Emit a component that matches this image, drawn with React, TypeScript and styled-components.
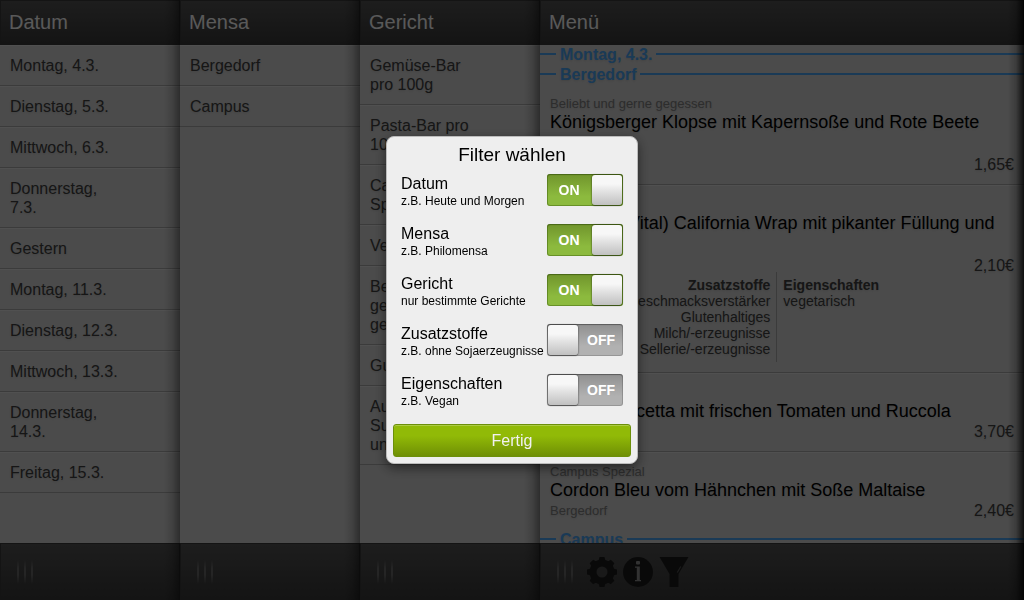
import React, { useState } from "react";
import styled, { createGlobalStyle, css } from "styled-components";

const GlobalStyle = createGlobalStyle`
  * { box-sizing: border-box; }
  body {
    margin: 0;
    overflow: hidden;
    background: #000;
    color: #333;
    font: 16px/19px "Liberation Sans", Arial, sans-serif;
  }
  ul { list-style: none; margin: 0; padding: 0; }
  h1, h2, h3, p { margin: 0; font-weight: normal; }
  button { font-family: inherit; cursor: pointer; }
`;

const Panels = styled.main`
  display: flex;
  height: 100vh;
`;

const PanelBox = styled.section<{ $grow?: boolean }>`
  position: relative;
  display: flex;
  flex-direction: column;
  flex: ${(p) => (p.$grow ? "1 1 0" : "0 0 180px")};
  min-width: 0;
  background: #d6d6d6;

  &::after {
    content: "";
    position: absolute;
    top: 0;
    right: 0;
    bottom: 0;
    width: 16px;
    pointer-events: none;
    background: linear-gradient(
      to right,
      transparent,
      rgba(0, 0, 0, ${(p) => (p.$grow ? 0.2 : 0.12)}) 50%,
      rgba(0, 0, 0, ${(p) => (p.$grow ? 0.8 : 0.4)})
    );
  }
`;

const bar = css`
  display: flex;
  align-items: center;
  flex: none;
  border: 1px solid #3a3a3a;
  background: linear-gradient(#545454, #3a3a3a);
`;

const Header = styled.header`
  ${bar}
  height: 45px;
  padding: 0 8px 2px;
  color: #fff;
  line-height: 24px;
  h2 { font-size: 20px; }
`;

const Footer = styled.footer`
  ${bar}
  height: 57px;
  padding: 0 10px 0 16px;
`;

const Body = styled.div`
  flex: 1;
  min-height: 0;
  overflow: hidden;
`;

const Grabber = styled.span`
  display: flex;
  gap: 5px;
  width: 27px;
  i {
    width: 2px;
    height: 24px;
    background: linear-gradient(transparent, #6c6c6c 35%, #6c6c6c 60%, transparent);
  }
`;

const rule = css`
  border-top: 1px solid #e4e4e4;
  border-bottom: 1px solid #aaa;
`;

const Row = styled.li`
  ${rule}
  padding: 10px 60px 10px 10px;
  color: #404040;
  text-shadow: 0 1px 2px rgba(0, 0, 0, 0.1);
`;

const Divider = styled.h3`
  display: flex;
  align-items: center;
  gap: 4px;
  height: 20px;
  color: #4aa5f5;
  font-size: 16px;
  font-weight: bold;
  line-height: 20px;
  text-shadow: 0 1px 2px rgba(0, 0, 0, 0.1);
  &::before, &::after {
    content: "";
    height: 2px;
    margin-bottom: 2px;
    background: #4aa5f5;
  }
  &::before { width: 16px; }
  &::after { flex: 1; }
`;

const Dish = styled.article`
  ${rule}
  padding: 10px;
  color: #404040;
  text-shadow: 0 1px 2px rgba(0, 0, 0, 0.1);
  h3 + & { border-top: 0; }
  &:has(+ h3) { border-bottom: 0; }
`;

const Note = styled.span`
  color: #808080;
  font-size: 13px;
`;

const Category = styled.p`
  height: 16px;
  color: #808080;
  font-size: 13px;
  line-height: 17px;
`;

const DishName = styled.h3`
  color: #000;
  font-size: 18px;
  line-height: 22px;
`;

const DishFoot = styled.div`
  display: flex;
  align-items: center;
  justify-content: space-between;
  height: 19px;
`;

const Details = styled.div`
  display: flex;
  margin-top: -3px;
  font-size: 14px;
  line-height: 16px;
  h3 { font-size: 14px; font-weight: bold; }
`;

const DetailList = styled.div<{ $left?: boolean }>`
  width: ${(p) => (p.$left ? "49%" : "51%")};
  padding: 5px 6px;
  ${(p) => p.$left && "text-align: right; border-right: 1px solid #aaa;"}
`;

const ToolButton = styled.button`
  display: flex;
  align-items: center;
  justify-content: center;
  width: 36px;
  height: 36px;
  padding: 0;
  border: 0;
  background: none;
`;

const Scrim = styled.div`
  position: fixed;
  inset: 0;
  display: flex;
  align-items: center;
  justify-content: center;
  background: rgba(0, 0, 0, 0.65);
`;

const Dialog = styled.form`
  width: 252px;
  padding: 6px;
  border: 1px solid #bbb;
  border-radius: 8px;
  background: #eee;
  color: #000;
  box-shadow: 0 4px 12px rgba(0, 0, 0, 0.5);
`;

const DialogTitle = styled.h1`
  margin-bottom: 4px;
  font-size: 19px;
  line-height: 24px;
  text-align: center;
`;

const FilterRow = styled.label`
  display: flex;
  align-items: flex-start;
  justify-content: space-between;
  height: 50px;
  padding: 3px 8px 0;
  white-space: nowrap;
`;

const FilterText = styled.span`
  display: flex;
  flex-direction: column;
  width: 146px;
  line-height: 19px;
  small { font-size: 12px; line-height: 17px; }
`;

const Switch = styled.span<{ $on: boolean }>`
  position: relative;
  display: flex;
  flex-direction: ${(p) => (p.$on ? "row" : "row-reverse")};
  flex: none;
  width: 76px;
  height: 32px;
  border-radius: 3px;
  background: ${(p) => (p.$on ? "linear-gradient(#70942c, #8cba3e 70%)" : "linear-gradient(#909090, #b1b1b1 70%)")};
  box-shadow:
    inset 0 0 0 1px ${(p) => (p.$on ? "rgba(60, 95, 10, 0.45)" : "rgba(0, 0, 0, 0.15)")},
    inset 0 1px 1px rgba(0, 0, 0, 0.25);
  color: #fff;
  font-size: 14px;
  font-weight: bold;
  line-height: 32px;
  text-align: center;
  input {
    position: absolute;
    inset: 0;
    width: 100%;
    height: 100%;
    margin: 0;
    opacity: 0;
    cursor: pointer;
  }
  b { flex: 1; }
`;

const Knob = styled.span`
  width: 30px;
  height: 30px;
  margin: 1px;
  border-radius: 3px;
  background: linear-gradient(#f7f7f7 30%, #e2e2e2 55%, #c0c0c0);
  box-shadow: 0 0 2px rgba(0, 0, 0, 0.7), 0 1px 1px rgba(0, 0, 0, 0.3);
`;

const DoneButton = styled.button`
  display: block;
  width: 100%;
  height: 33px;
  margin-top: 3px;
  padding: 0;
  border: 1px solid #6c8f0a;
  border-radius: 3px;
  background: linear-gradient(#91ba07 35%, #6f8f05);
  box-shadow: inset 0 1px 0 rgba(255, 255, 255, 0.25);
  color: #f1f1f1;
  font-size: 16px;
  line-height: 19px;
`;

function Panel(props: { title: string; grow?: boolean; tools?: React.ReactNode; children: React.ReactNode }) {
  return (
    <PanelBox $grow={props.grow}>
      <Header><h2>{props.title}</h2></Header>
      <Body>{props.children}</Body>
      <Footer>
        <Grabber aria-hidden="true"><i /><i /><i /></Grabber>
        {props.tools}
      </Footer>
    </PanelBox>
  );
}

function List({ items }: { items: string[] }) {
  return <ul>{items.map((item) => <Row key={item}>{item}</Row>)}</ul>;
}

const GearIcon = () => (
  <svg width="30" height="30" viewBox="0 0 30 30" fill="#1c1c1c" aria-hidden="true">
    {[0, 45, 90, 135].map((a) => (
      <path key={a} d="M12.500 0h5l1 4v22l-1 4h-5l-1-4V4z" transform={`rotate(${a} 15 15)`} />
    ))}
    <circle cx="15" cy="15" r="12.500" />
    <circle cx="15" cy="15" r="5.500" fill="#484848" />
  </svg>
);

const InfoIcon = () => (
  <svg width="30" height="30" viewBox="0 0 30 30" aria-hidden="true">
    <circle cx="15" cy="15" r="15" fill="#1c1c1c" />
    <rect x="13" y="4" width="4" height="3.500" rx="1" fill="#909090" />
    <path d="M12 9.500h4.800v13.500H18v1.200h-6V23h1.800V10.800H12z" fill="#909090" />
  </svg>
);

const FunnelIcon = () => (
  <svg width="30" height="30" viewBox="0 0 30 30" aria-hidden="true">
    <path d="M.5 0h29L19.500 17v13h-9V17z" fill="#1c1c1c" />
    <path d="M21.800 9.500L18.300 15.500" stroke="#505050" strokeWidth="1.200" />
  </svg>
);

const dates = [
  "Montag, 4.3.", "Dienstag, 5.3.", "Mittwoch, 6.3.", "Donnerstag, 7.3.", "Gestern",
  "Montag, 11.3.", "Dienstag, 12.3.", "Mittwoch, 13.3.", "Donnerstag, 14.3.", "Freitag, 15.3.",
];

const dishTypes = [
  "Gemüse-Bar pro 100g", "Pasta-Bar pro 100g", "Campus Spezialität", "Vegetarisch",
  "Beliebt und gerne gegessen", "Gutbürgerlich", "Auflauf Suppentopf und Salat",
];

const initialFilters = [
  { name: "Datum", hint: "z.B. Heute und Morgen", on: true },
  { name: "Mensa", hint: "z.B. Philomensa", on: true },
  { name: "Gericht", hint: "nur bestimmte Gerichte", on: true },
  { name: "Zusatzstoffe", hint: "z.B. ohne Sojaerzeugnisse", on: false },
  { name: "Eigenschaften", hint: "z.B. Vegan", on: false },
];

function MenuItem(props: {
  note?: string; name: string; place: string; price: string; children?: React.ReactNode;
}) {
  return (
    <Dish>
      <Category>{props.note}</Category>
      <DishName>{props.name}</DishName>
      <DishFoot>
        <Note>{props.place}</Note>
        <span>{props.price}</span>
      </DishFoot>
      {props.children}
    </Dish>
  );
}

export default function App() {
  const [filters, setFilters] = useState(initialFilters);
  const [open, setOpen] = useState(true);
  const toggle = (name: string) =>
    setFilters(filters.map((f) => (f.name === name ? { ...f, on: !f.on } : f)));

  return (
    <>
      <GlobalStyle />
      <Panels>
        <Panel title="Datum"><List items={dates} /></Panel>
        <Panel title="Mensa"><List items={["Bergedorf", "Campus"]} /></Panel>
        <Panel title="Gericht"><List items={dishTypes} /></Panel>
        <Panel
          title="Menü"
          grow
          tools={
            <>
              <ToolButton aria-label="Einstellungen"><GearIcon /></ToolButton>
              <ToolButton aria-label="Info"><InfoIcon /></ToolButton>
              <ToolButton aria-label="Filter" onClick={() => setOpen(true)}><FunnelIcon /></ToolButton>
            </>
          }
        >
          <Divider>Montag, 4.3.</Divider>
          <Divider>Bergedorf</Divider>
          <MenuItem
            note="Beliebt und gerne gegessen"
            name="Königsberger Klopse mit Kapernsoße und Rote Beete Salat"
            place="Bergedorf"
            price="1,65€"
          />
          <MenuItem
            name="Campus (Vital) California Wrap mit pikanter Füllung und Salat"
            place="Bergedorf"
            price="2,10€"
          >
            <Details>
              <DetailList $left>
                <h3>Zusatzstoffe</h3>
                <p>Geschmacksverstärker</p>
                <p>Glutenhaltiges</p>
                <p>Milch/-erzeugnisse</p>
                <p>Sellerie/-erzeugnisse</p>
              </DetailList>
              <DetailList>
                <h3>Eigenschaften</h3>
                <p>vegetarisch</p>
              </DetailList>
            </Details>
          </MenuItem>
          <MenuItem
            name="Pizza Bruscetta mit frischen Tomaten und Ruccola"
            place="Bergedorf"
            price="3,70€"
          />
          <MenuItem
            note="Campus Spezial"
            name="Cordon Bleu vom Hähnchen mit Soße Maltaise"
            place="Bergedorf"
            price="2,40€"
          />
          <Divider>Campus</Divider>
        </Panel>
      </Panels>
      {open && (
        <Scrim>
          <Dialog role="dialog" aria-labelledby="filter-title" onSubmit={(e) => { e.preventDefault(); setOpen(false); }}>
            <DialogTitle id="filter-title">Filter wählen</DialogTitle>
            {filters.map((f) => (
              <FilterRow key={f.name}>
                <FilterText>
                  {f.name}
                  <small>{f.hint}</small>
                </FilterText>
                <Switch $on={f.on}>
                  <b>{f.on ? "ON" : "OFF"}</b>
                  <Knob />
                  <input type="checkbox" role="switch" checked={f.on} onChange={() => toggle(f.name)} />
                </Switch>
              </FilterRow>
            ))}
            <DoneButton type="submit">Fertig</DoneButton>
          </Dialog>
        </Scrim>
      )}
    </>
  );
}
